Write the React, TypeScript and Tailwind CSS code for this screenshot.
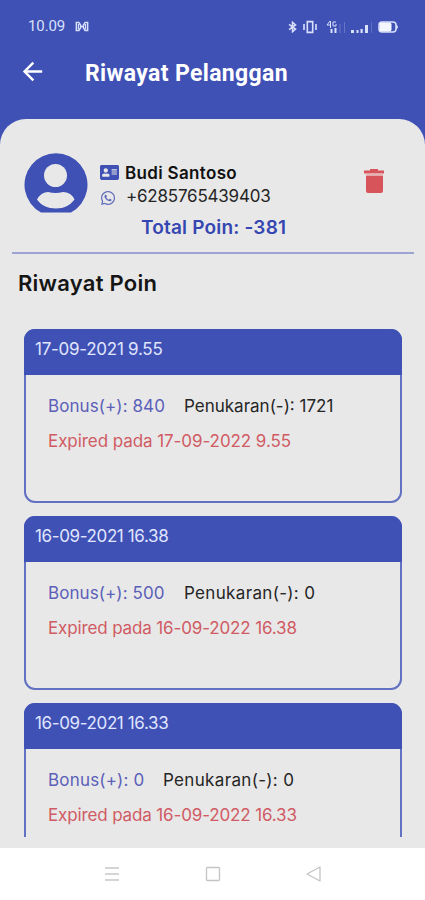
import React from 'react';
import { FaAddressCard, FaWhatsapp } from 'react-icons/fa';
import { MdArrowBack } from 'react-icons/md';

const history = [
  {
    date: '17-09-2021 9.55',
    bonus: 'Bonus(+): 840',
    redeemed: 'Penukaran(-): 1721',
    expired: 'Expired pada 17-09-2022 9.55',
    dateW: 'w-[127px]', bonusW: 'w-[117px]', redeemedW: 'w-[149px]', expiredW: 'w-[243px]',
  },
  {
    date: '16-09-2021 16.38',
    bonus: 'Bonus(+): 500',
    redeemed: 'Penukaran(-): 0',
    expired: 'Expired pada 16-09-2022 16.38',
    dateW: 'w-[133px]', bonusW: 'w-[117px]', redeemedW: 'w-[131px]', expiredW: 'w-[249px]',
  },
  {
    date: '16-09-2021 16.33',
    bonus: 'Bonus(+): 0',
    redeemed: 'Penukaran(-): 0',
    expired: 'Expired pada 16-09-2022 16.33',
    dateW: 'w-[133px]', bonusW: 'w-[96px]', redeemedW: 'w-[131px]', expiredW: 'w-[249px]',
  },
];

function StatusBar() {
  return (
    <div className="flex h-[52px] items-center pl-7 pr-[26px] text-[#d9e0fb]">
      <span className="mt-px font-[Roboto] text-[15px] leading-none tracking-[-0.1px]">10.09</span>
      <svg className="ml-[10px] mt-px" width="14" height="11" viewBox="0 0 16 12" fill="none" stroke="currentColor" strokeWidth="1.6">
        <path d="M1.5 1.5h3l2 3v3l-2 3h-3zM14.5 1.5h-3l-2 3v3l2 3h3zM4 3v6M12 3v6M6 6h4" />
      </svg>
      <div className="ml-auto mt-px flex items-center">
        <svg width="11" height="12" viewBox="0 0 11 14" fill="none" stroke="currentColor" strokeWidth="1.8">
          <path d="M1.5 4 9 9.5 5.5 12.5V1.5L9 4.5 1.5 10" />
        </svg>
        <svg className="ml-[5px]" width="14" height="14" viewBox="0 0 14 14" fill="none" stroke="currentColor" strokeWidth="1.6">
          <path d="M4.3 1.6h5.4v10.8H4.3zM1 4v6M13 4v6" />
        </svg>
        <svg className="ml-[9px]" width="21" height="14" viewBox="0 0 21 14" fill="currentColor">
          <path d="M4 1 1 5h4M4.5 1v7M10 2H7v4h3V4" fill="none" stroke="currentColor" strokeWidth="1" />
          <path d="M4.500 9h2v4h-2zM8.500 8h2v5h-2z" />
          <path d="M13.500 4h1v9h-1zM18 2h1v11h-1z" opacity=".25" />
        </svg>
        <svg className="ml-[3px]" width="24" height="14" viewBox="0 0 24 14" fill="currentColor">
          <path d="M1 10h3v3H1zM6.500 10h2v3h-2zM10.500 9h2.200v4h-2.200zM15 5h3v8h-3z" />
          <path d="M21 2h1v11h-1z" opacity=".2" />
        </svg>
        <svg className="ml-1" width="21" height="12" viewBox="0 0 21 12">
          <rect x="1" y="1" width="17" height="10" rx="3" fill="none" stroke="currentColor" strokeWidth="1.5" />
          <rect x="1.5" y="1.5" width="12" height="9" rx="2" fill="#f5f7ff" />
          <path d="M18.5 4q2 2 0 4z" fill="currentColor" stroke="currentColor" />
        </svg>
      </div>
    </div>
  );
}

// Stretches or squeezes the letter spacing so one line fills the given box
function Line({ text, className }: { text: string; className: string }) {
  const ref = React.useRef<HTMLSpanElement>(null);
  const [spacing, setSpacing] = React.useState(0);

  React.useLayoutEffect(() => {
    const el = ref.current;
    if (!el || !el.parentElement) return;
    setSpacing((el.parentElement.clientWidth - el.offsetWidth) / text.length);
  }, [text]);

  return (
    <div className={`shrink-0 whitespace-nowrap ${className}`}>
      <span ref={ref} className="inline-block" style={{ letterSpacing: spacing }}>{text}</span>
    </div>
  );
}

function Avatar() {
  return (
    <svg width="64" height="61" viewBox="0 0 64 61">
      <path d="M17 60.5A31.5 31.5 0 1 1 47 60.5Z" fill="#3f51b5" />
      <circle cx="31.5" cy="23.5" r="11.5" fill="#e8e8e8" />
      <path d="M13 47.5C15 43 20 40 24 40q7.500 2 15 0C44 40 49 43 50.500 47.500C46 53.500 40 56.500 32 56.500S17 53.500 13 47.500Z" fill="#e8e8e8" />
    </svg>
  );
}

function HistoryCard({ item }: { item: (typeof history)[number] }) {
  return (
    <div className="h-[174px] shrink-0 rounded-[11px] border-2 border-[#6271c1] bg-[#e8e8e8]">
      <div className="-mx-0.5 -mt-0.5 h-[46px] rounded-t-[11px] bg-[#3f51b5] pl-[11px] pt-2 text-[17px] leading-6 text-[#e0e6ff]">
        <Line text={item.date} className={item.dateW} />
      </div>
      <div className="pl-[22px] pt-[19px] text-[17px] leading-6">
        <div className="flex gap-[19px]">
          <Line text={item.bonus} className={`text-[#5b60b9] ${item.bonusW}`} />
          <Line text={item.redeemed} className={`text-[#252525] ${item.redeemedW}`} />
        </div>
        <Line text={item.expired} className={`mt-[11px] text-[#d05b64] ${item.expiredW}`} />
      </div>
    </div>
  );
}

export default function App() {
  return (
    <div className="flex h-[900px] w-[425px] flex-col overflow-hidden bg-[#3f51b5] font-[Inter,sans-serif]">
      <StatusBar />
      <header className="flex h-[67px] shrink-0 items-start pl-[18px] pt-[5px] text-white">
        <MdArrowBack size={29} />
        <h1 className="ml-[38px] mt-[3px] font-[Roboto] text-[23px] font-bold leading-7">
          <Line text="Riwayat Pelanggan" className="w-[203px]" />
        </h1>
      </header>

      <main className="flex min-h-0 flex-1 flex-col overflow-hidden rounded-t-[26px] bg-[#e8e8e8]">
        {/* Customer */}
        <section className="ml-3 mr-[11px] h-[135px] shrink-0 border-b-2 border-[#9da3d3] pt-[33px]">
          <div className="flex pl-3">
            <Avatar />
            <div className="ml-3 pt-[9px]">
              <div className="flex h-[23px] items-center gap-[6px]">
                <FaAddressCard size={19} className="text-[#3f51b5]" />
                <Line text="Budi Santoso" className="mt-0.5 w-[112px] text-[17px] font-semibold text-[#111]" />
              </div>
              <div className="flex h-6 items-center gap-[10px]">
                <FaWhatsapp size={16} className="mt-[3px] text-[#5c69bb]" />
                <Line text="+6285765439403" className="mt-0.5 w-[144px] text-[17px] text-[#252525]" />
              </div>
            </div>
            <svg className="ml-[93px] mt-[17px]" width="22" height="25" viewBox="0 0 22 25">
              <path d="M7 0h8v1.500h6v3H1v-3h6zM3 6.500h17V22q0 2-2 2H5q-2 0-2-2z" fill="#d7545a" />
              <path d="M3 4.500h17v2H3z" fill="#e6b3b5" />
            </svg>
          </div>
          <Line text="Total Poin: -381" className="ml-[129px] mt-[3px] w-[145px] text-[19px] font-semibold leading-6 text-[#3546b2]" />
        </section>

        <h2 className="ml-[18px] mt-[15px] text-[22px] font-semibold leading-7 text-[#151515]">
          <Line text="Riwayat Poin" className="w-[139px]" />
        </h2>

        <div className="mb-[11px] ml-6 mr-[23px] mt-8 flex min-h-0 flex-1 flex-col gap-[13px] overflow-hidden">
          {history.map((item) => <HistoryCard key={item.date} item={item} />)}
        </div>
      </main>

      <nav className="flex h-[52px] shrink-0 items-center bg-white pl-[104px]">
        <svg width="16" height="16" viewBox="0 0 16 16" stroke="#c8c8c8" strokeWidth="1.3">
          <path d="M1 2h14M1 8h14M1 14h14" />
        </svg>
        <svg className="ml-[85px]" width="16" height="16" viewBox="0 0 16 16" fill="none" stroke="#c4c4c4" strokeWidth="1.3">
          <rect x="1.5" y="1.5" width="13" height="13" rx="1" />
        </svg>
        <svg className="ml-[84px]" width="17" height="18" viewBox="0 0 17 18" fill="none" stroke="#c4c4c4" strokeWidth="1.3" strokeLinejoin="round">
          <path d="M15 2v14L2 9z" />
        </svg>
      </nav>
    </div>
  );
}
